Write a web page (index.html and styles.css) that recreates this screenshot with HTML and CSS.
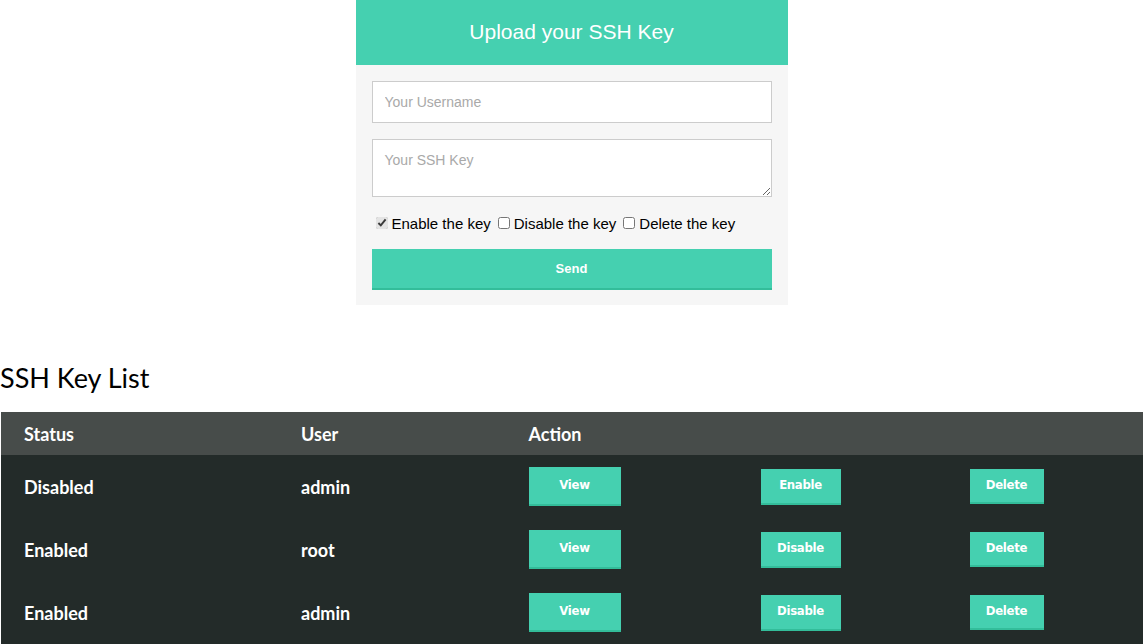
FILE: index.html
```html
<!DOCTYPE html>
<html lang="en">
<head>
    <meta charset="UTF-8">
    <meta name="viewport" content="width=device-width, initial-scale=1.0">
    <title>SSH Key Manager</title>
    <link rel="stylesheet" href="styles.css">
</head>
<body>
    <div class="upload">
        <h1>Upload your SSH Key</h1>
        <form class="upload-form">
            <input type="text" placeholder="Your Username">
            <textarea placeholder="Your SSH Key"></textarea>
            <div class="options">
                <label><input type="checkbox" checked> Enable the key</label>
                <label><input type="checkbox"> Disable the key</label>
                <label><input type="checkbox"> Delete the key</label>
            </div>
            <button type="button" class="send">Send</button>
        </form>
    </div>

    <h2 class="list-title">SSH Key List</h2>
    <table class="keys">
        <thead>
            <tr>
                <th class="col-status">Status</th>
                <th class="col-user">User</th>
                <th class="col-view">Action</th>
                <th class="col-toggle"></th>
                <th></th>
            </tr>
        </thead>
        <tbody>
            <tr>
                <td>Disabled</td>
                <td>admin</td>
                <td><button class="btn btn-view">View</button></td>
                <td><button class="btn btn-toggle">Enable</button></td>
                <td><button class="btn btn-delete">Delete</button></td>
            </tr>
            <tr>
                <td>Enabled</td>
                <td>root</td>
                <td><button class="btn btn-view">View</button></td>
                <td><button class="btn btn-toggle">Disable</button></td>
                <td><button class="btn btn-delete">Delete</button></td>
            </tr>
            <tr>
                <td>Enabled</td>
                <td>admin</td>
                <td><button class="btn btn-view">View</button></td>
                <td><button class="btn btn-toggle">Disable</button></td>
                <td><button class="btn btn-delete">Delete</button></td>
            </tr>
        </tbody>
    </table>
</body>
</html>
```

FILE: styles.css
```css
body {
    margin: 0;
    font-family: 'Liberation Sans', Arial, sans-serif;
    background-color: #fff;
    color: #000;
}
.upload {
    width: 432px;
    margin: 0 auto;
    background-color: #f6f6f6;
}
.upload h1 {
    margin: 0;
    height: 65px;
    line-height: 64px;
    background-color: #45d0b0;
    color: #fff;
    font-size: 21px;
    font-weight: normal;
    text-align: center;
}
.upload-form {
    padding: 16px 16px 15px;
    display: flex;
    flex-direction: column;
}
.upload-form input[type="text"],
.upload-form textarea {
    width: 100%;
    box-sizing: border-box;
    border: 1px solid #ccc;
    background: #fff;
    font-family: 'Liberation Sans', Arial, sans-serif;
    font-size: 14px;
    padding: 0 12px;
    margin: 0;
    outline: none;
}
.upload-form input[type="text"] {
    height: 42px;
    margin-bottom: 16px;
}
.upload-form textarea {
    height: 58px;
    padding-top: 12px;
    resize: vertical;
}
.upload-form ::placeholder {
    color: #a9a9a9;
}
.options {
    display: flex;
    gap: 7px;
    font-size: 15px;
    margin: 13px 0 0 4px;
    height: 26px;
    align-items: center;
}
.options label {
    display: flex;
    align-items: center;
}
.options input {
    margin: 0 4px 0 0;
    width: 12px;
    height: 12px;
    accent-color: #e4e4e4;
}
.send {
    margin-top: 13px;
    height: 41px;
    border: none;
    border-bottom: 2px solid #33bd9a;
    background-color: #45d0b0;
    color: #fff;
    font-family: 'Liberation Sans', Arial, sans-serif;
    font-size: 13px;
    font-weight: bold;
    cursor: pointer;
}
.list-title {
    margin: 58px 0 0;
    font-family: Lato, 'Noto Sans', sans-serif;
    font-weight: normal;
    font-size: 27px;
    height: 49px;
    line-height: 30px;
}
.keys {
    width: 100%;
    border-collapse: collapse;
    font-family: Lato, 'Noto Sans', sans-serif;
    font-weight: bold;
    font-size: 18px;
    color: #fff;
    border-left: 1px solid #fff;
}
.keys th {
    background-color: #474c4a;
    text-align: left;
    font-weight: bold;
    height: 43px;
    padding: 0 0 0 23px;
}
.keys td {
    background-color: #232b29;
    height: 63px;
    padding: 0 0 0 23px;
}
.col-status { width: 254px; }
.col-user { width: 204px; }
.col-view { width: 209px; }
.col-toggle { width: 186px; }
.btn {
    display: block;
    border: none;
    border-bottom: 2px solid #33bd9a;
    background-color: #45d0b0;
    color: #fff;
    font-family: 'DejaVu Sans Condensed', 'Liberation Sans Narrow', 'Liberation Sans', sans-serif;
    font-stretch: condensed;
    font-size: 13px;
    font-weight: bold;
    letter-spacing: -0.3px;
    padding: 0 0 3px;
    margin: 0;
    cursor: pointer;
}
.btn-view {
    width: 92px;
    height: 39px;
}
.btn-toggle {
    width: 80px;
    height: 36px;
}
.btn-delete {
    width: 74px;
    height: 35px;
}
```
